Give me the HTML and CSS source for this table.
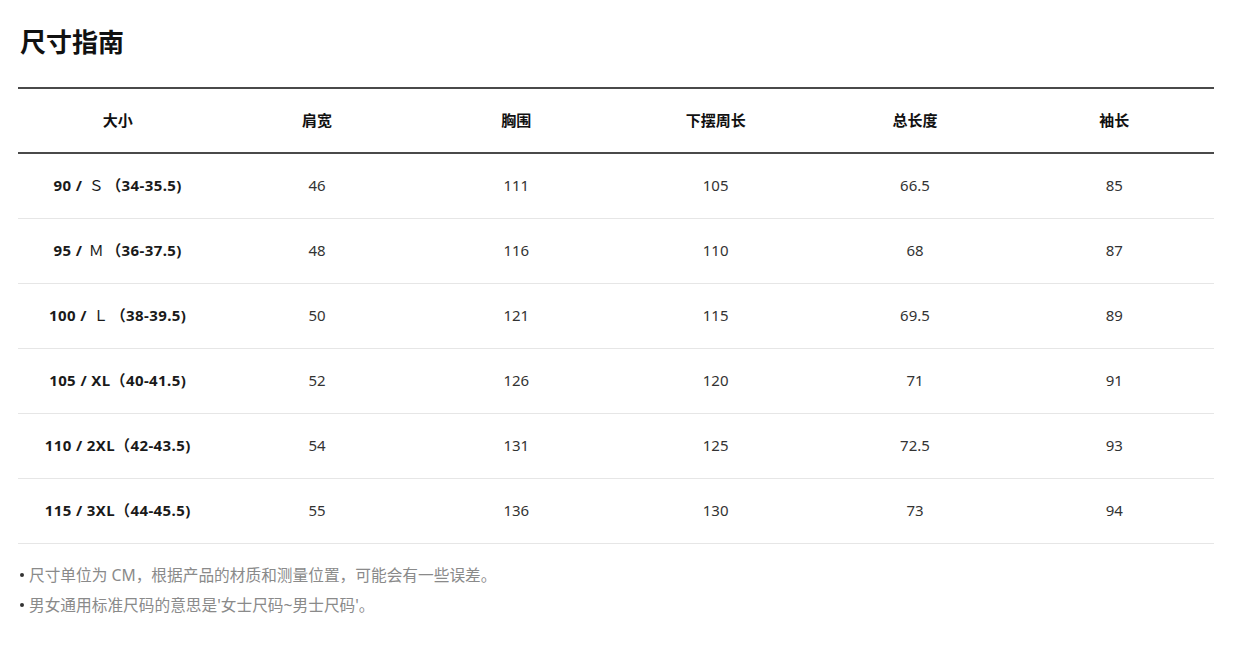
FILE: index.html
```html
<!DOCTYPE html>
<html lang="zh">
<head>
<meta charset="utf-8">
<title>尺寸指南</title>
<link rel="stylesheet" href="styles.css">
</head>
<body>
<div class="page">
  <h1 class="title">尺寸指南</h1>
  <table class="size-table">
    <thead>
      <tr><th>大小</th><th>肩宽</th><th>胸围</th><th>下摆周长</th><th>总长度</th><th>袖长</th></tr>
    </thead>
    <tbody>
      <tr><td class="size">90 / <span class="serif">Ｓ</span>（34-35.5)</td><td>46</td><td>111</td><td>105</td><td>66.5</td><td>85</td></tr>
      <tr><td class="size">95 / <span class="serif">Ｍ</span>（36-37.5)</td><td>48</td><td>116</td><td>110</td><td>68</td><td>87</td></tr>
      <tr><td class="size">100 / <span class="serif">Ｌ</span>（38-39.5)</td><td>50</td><td>121</td><td>115</td><td>69.5</td><td>89</td></tr>
      <tr><td class="size">105 / XL（40-41.5)</td><td>52</td><td>126</td><td>120</td><td>71</td><td>91</td></tr>
      <tr><td class="size">110 / 2XL（42-43.5)</td><td>54</td><td>131</td><td>125</td><td>72.5</td><td>93</td></tr>
      <tr><td class="size">115 / 3XL（44-45.5)</td><td>55</td><td>136</td><td>130</td><td>73</td><td>94</td></tr>
    </tbody>
  </table>
  <ul class="notes">
    <li>尺寸单位为 CM，根据产品的材质和测量位置，可能会有一些误差。</li>
    <li>男女通用标准尺码的意思是'女士尺码~男士尺码'。</li>
  </ul>
</div>
</body>
</html>
```

FILE: styles.css
```css
html, body {
  margin: 0;
  padding: 0;
  background: #ffffff;
}

body {
  font-family: "Noto Sans", "Noto Sans CJK SC", sans-serif;
  color: #222;
}

.page {
  padding: 24px 46px 0 18px;
}

.title {
  margin: 0 0 27px 2px;
  font-size: 26px;
  line-height: 36px;
  font-weight: 700;
  color: #111;
}

.size-table {
  width: 1196px;
  border-collapse: collapse;
  table-layout: fixed;
}

.size-table th {
  height: 61px;
  font-size: 15px;
  font-weight: 700;
  color: #111;
  border-top: 2px solid #4a4a4a;
  border-bottom: 2px solid #4a4a4a;
  text-align: center;
  padding: 0 0 2px 0;
}

.size-table td {
  height: 61px;
  font-size: 15px;
  color: #333;
  text-align: center;
  border-bottom: 1px solid #e6e6e6;
  padding: 0 0 3px 0;
}

.size-table td.size {
  font-weight: 700;
  color: #1a1a1a;
  letter-spacing: 0.4px;
}

.serif {
  font-family: "Liberation Serif", "Noto Sans CJK SC", serif;
  font-weight: 400;
  padding: 0 2px;
}

.notes {
  list-style: none;
  margin: 16px 0 0 0;
  padding: 0;
}

.notes li {
  position: relative;
  padding-left: 11px;
  font-size: 15.7px;
  line-height: 30px;
  color: #8a8a8a;
}

.notes li::before {
  content: "";
  position: absolute;
  left: 2px;
  top: 13px;
  width: 4px;
  height: 4px;
  border-radius: 50%;
  background: #333;
}
```
